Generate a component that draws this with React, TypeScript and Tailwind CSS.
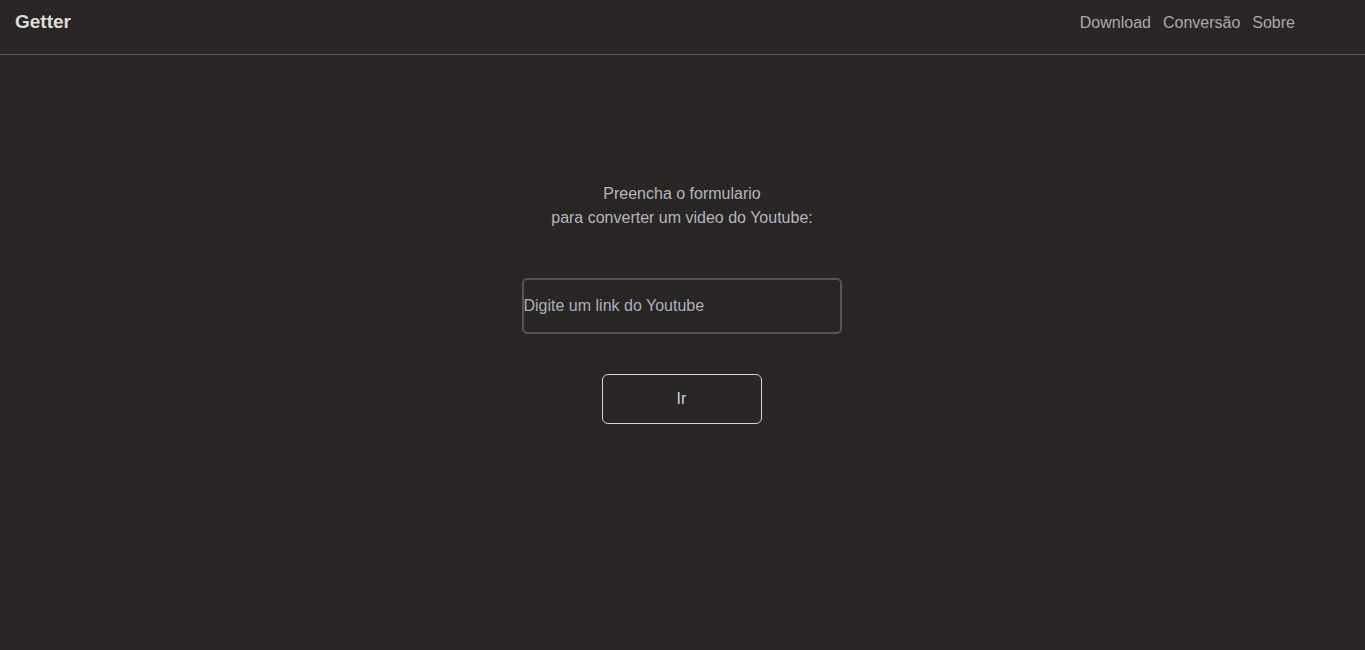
import React, { useState } from 'react';

export default function App() {
  const [link, setLink] = useState('');

  return (
    <div className="min-h-screen w-full bg-[#292524] font-['Liberation_Sans',Arial,sans-serif]">
      {/* Top bar */}
      <header className="h-[55px] flex items-start justify-between border-b border-[#5c5857] px-[15px]">
        <h1 className="mt-[11px] text-[19px] leading-[22px] font-bold text-[#dcdcdc]">Getter</h1>
        <nav className="mt-[13px] mr-[55px] flex gap-[12px] text-[16px] leading-[20px] text-[#a9a9ab]">
          <a href="#">Download</a>
          <a href="#">Conversão</a>
          <a href="#">Sobre</a>
        </nav>
      </header>

      {/* Form */}
      <main className="flex flex-col items-center pt-[127px] pr-[1px]">
        <p className="text-center text-[16px] leading-[24px] text-[#b3b6bf]">
          Preencha o formulario
          <br />
          para converter um video do Youtube:
        </p>

        <input
          value={link}
          onChange={(e) => setLink(e.target.value)}
          placeholder="Digite um link do Youtube"
          className="mt-[48px] mr-[1px] w-[320px] h-[56px] rounded-[5px] border-2 border-[#57524f] bg-transparent px-0 text-[16px] text-[#c8ccd6] placeholder:text-[#a9b0bf] outline-none"
        />

        <button className="mt-[40px] mr-[1px] w-[160px] h-[50px] rounded-[6px] border border-[#d4d4d4] bg-transparent text-[16px] text-[#c4d2ea]">
          Ir
        </button>
      </main>
    </div>
  );
}
